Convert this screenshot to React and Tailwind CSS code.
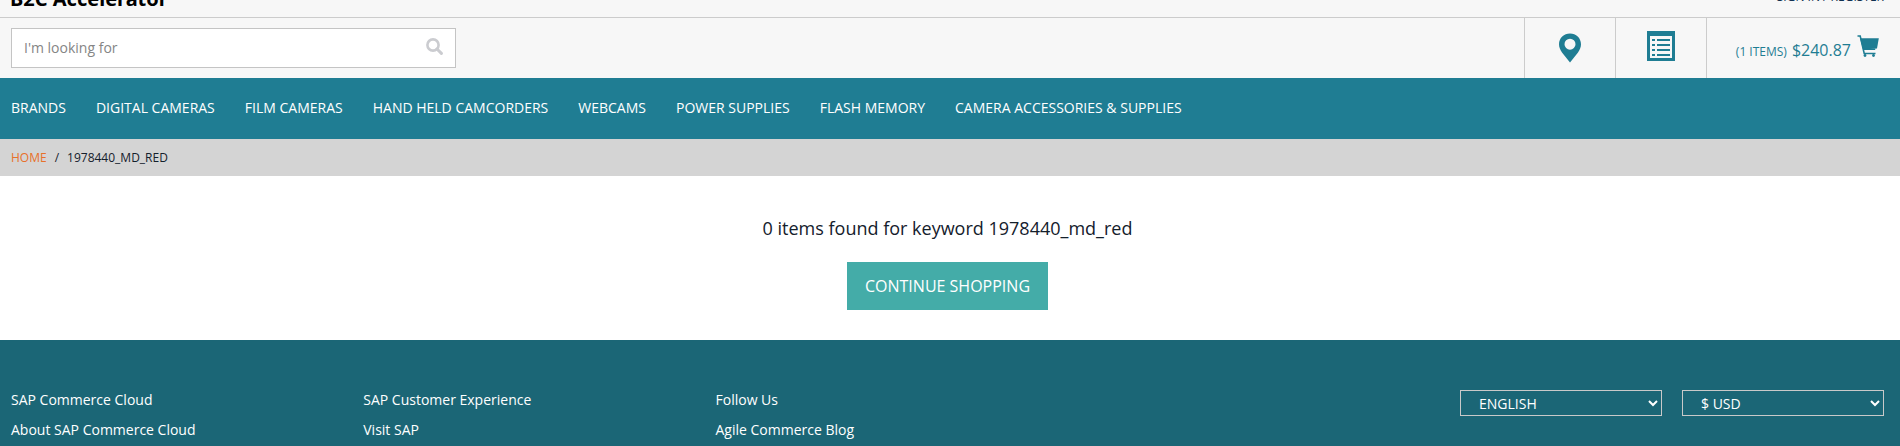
import React, { useState } from 'react';

const categories = [
  'Brands',
  'Digital Cameras',
  'Film Cameras',
  'Hand Held Camcorders',
  'Webcams',
  'Power Supplies',
  'Flash Memory',
  'Camera Accessories & Supplies',
];

const footerLinks = [
  { title: 'SAP Commerce Cloud', links: ['About SAP Commerce Cloud'] },
  { title: 'SAP Customer Experience', links: ['Visit SAP'] },
  { title: 'Follow Us', links: ['Agile Commerce Blog'] },
];

export default function App() {
  return (
    <div className="font-['Open_Sans','Noto_Sans',sans-serif] text-sm text-[#14202c] bg-white">
      <Header />
      <Navigation />
      <Breadcrumb />
      <main className="flex flex-col items-center pt-10 pb-[30px] pr-[5px]">
        <h1 className="text-lg leading-6 mb-[22px]">0 items found for keyword 1978440_md_red</h1>
        <button
          type="button"
          className="bg-[#44aca8] hover:bg-[#3a9793] text-white text-base leading-6 uppercase px-[18px] py-3"
        >
          Continue Shopping
        </button>
      </main>
      <Footer />
    </div>
  );
}

function Header() {
  const [query, setQuery] = useState('');

  return (
    <header className="bg-[#f7f7f7]">
      {/* Brand strip, scrolled mostly out of view */}
      <div className="h-[18px] overflow-hidden flex items-end justify-between pl-[10px] pr-4 border-b border-[#cccccc]">
        <span className="font-['Noto_Sans'] font-bold text-xl leading-6 pb-[6px] text-black">B2C Accelerator</span>
        <a href="#login" className="text-xs leading-4 pb-3 text-[#0f3050] uppercase">
          Sign in / Register
        </a>
      </div>

      <div className="flex items-stretch justify-between h-[60px] pl-[11px]">
        <form className="self-center flex items-center w-[445px] h-10 bg-white border border-[#c4c4c4]" onSubmit={(e) => e.preventDefault()}>
          <input
            type="text"
            aria-label="Search"
            className="flex-1 h-full px-3 pb-[2px] text-sm text-gray-800 placeholder:text-[#858585] focus:outline-none"
            placeholder="I'm looking for"
            value={query}
            onChange={(e) => setQuery(e.target.value)}
          />
          <button type="submit" aria-label="Submit search" className="px-3 pb-1">
            <SearchIcon />
          </button>
        </form>

        <div className="flex text-[#1f7d93]">
          <a href="#stores" aria-label="Find a store" className="w-[91px] flex items-center justify-center border-l border-[#cccccc]">
            <PinIcon />
          </a>
          <a href="#order-forms" aria-label="Order forms" className="w-[91px] flex items-center justify-center pb-1 border-l border-[#cccccc]">
            <ListIcon />
          </a>
          <a href="#cart" className="flex items-center gap-[6px] pl-[29px] pr-[21px] border-l border-[#cccccc]">
            <span className="flex items-baseline gap-[5px] pt-1">
              <span className="text-xs">(1 ITEMS)</span>
              <span className="text-base">$240.87</span>
            </span>
            <span className="pb-1">
              <CartIcon />
            </span>
          </a>
        </div>
      </div>
    </header>
  );
}

function Navigation() {
  return (
    <nav className="bg-[#1f7d93] text-white">
      <ul className="flex gap-[30px] px-[11px] pt-5 pb-[21px]">
        {categories.map((name) => (
          <li key={name}>
            <a href="#category" className="block uppercase text-sm leading-5 whitespace-nowrap">
              {name}
            </a>
          </li>
        ))}
      </ul>
    </nav>
  );
}

function Breadcrumb() {
  return (
    <ol className="flex gap-2 bg-[#d4d4d4] px-[11px] pt-[11px] pb-[10px] text-xs leading-4 uppercase">
      <li>
        <a href="#home" className="text-[#e8702a]">Home</a>
      </li>
      <li aria-hidden="true">/</li>
      <li>1978440_md_red</li>
    </ol>
  );
}

function Footer() {
  return (
    <footer className="bg-[#1b6676] text-white flex pt-[50px] pl-[11px] pr-4">
      <div className="flex-1 grid grid-cols-4 mr-10">
        {footerLinks.map((column) => (
          <div key={column.title}>
            <h2 className="leading-5 mb-[10px]">{column.title}</h2>
            <ul>
              {column.links.map((link) => (
                <li key={link} className="leading-5 pb-[6px]">
                  <a href="#footer">{link}</a>
                </li>
              ))}
            </ul>
          </div>
        ))}
      </div>
      <div className="flex gap-5 items-start">
        <FooterSelect label="Language" options={['ENGLISH', 'DEUTSCH']} />
        <FooterSelect label="Currency" options={['$ USD', '¥ JPY']} />
      </div>
    </footer>
  );
}

function FooterSelect({ label, options }) {
  return (
    <div className="relative w-[202px]">
      <select
        aria-label={label}
        className="appearance-none block w-full h-[26px] pl-[18px] pr-6 pt-px text-sm leading-6 bg-[#1b6676] text-white border border-[#c9c9c9]"
      >
        {options.map((option) => (
          <option key={option}>{option}</option>
        ))}
      </select>
      <svg className="absolute right-1 top-[10px] pointer-events-none" width="10" height="7" viewBox="0 0 10 7" fill="none">
        <path d="M1 1l4 4 4-4" stroke="white" strokeWidth="2" />
      </svg>
    </div>
  );
}

function SearchIcon() {
  return (
    <svg width="17" height="17" viewBox="0 0 17 17" fill="none" stroke="#cbccd0">
      <circle cx="7" cy="7" r="5.6" strokeWidth="2.6" />
      <path d="M11 11l4.4 4.4" strokeWidth="3" strokeLinecap="round" />
    </svg>
  );
}

function PinIcon() {
  return (
    <svg width="22" height="30" viewBox="0 0 22 30" fill="currentColor">
      <path fillRule="evenodd" d="M11 .5C5 .5 0 5 0 11.300c0 3 1.300 5.700 3 8.200L11 29.500l8-10c1.700-2.500 3-5.200 3-8.200C22 5 17 .5 11 .5zm0 5.200a5.500 5.500 0 1 1 0 11 5.500 5.500 0 0 1 0-11z" />
    </svg>
  );
}

function ListIcon() {
  return (
    <svg width="28" height="30" viewBox="0 0 28 30">
      <path fill="currentColor" fillRule="evenodd" d="M0 0h28v30H0zM3 5v22h22V5z" />
      <path stroke="currentColor" strokeWidth="2" d="M5 9h3M10 9h13M5 14h3M10 14h13M5 19h3M10 19h13M5 24h3M10 24h13" />
    </svg>
  );
}

function CartIcon() {
  return (
    <svg width="22" height="22" viewBox="0 0 22 22" fill="currentColor">
      <path d="M3 3.200h18.800L20 13.500 6 14.500z" />
      <path d="M.5 1h2.700l4 17.500h11.300" fill="none" stroke="currentColor" strokeWidth="1.600" />
      <path d="M18.200 13.500v1.500H6.500v-1.500z" />
      <circle cx="8" cy="20.500" r="1.400" />
      <circle cx="16.500" cy="20.500" r="1.400" />
    </svg>
  );
}
